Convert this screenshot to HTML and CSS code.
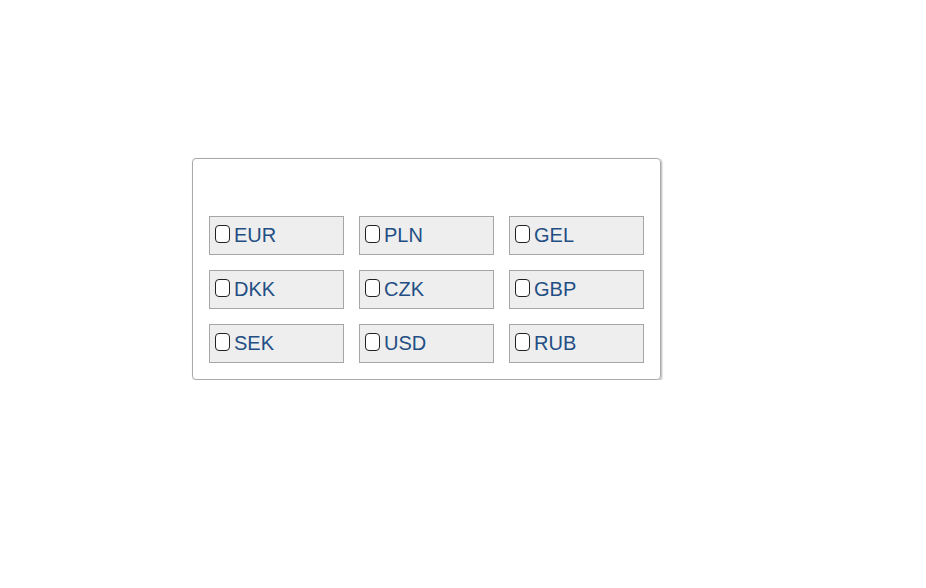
FILE: index.html
```html
<!DOCTYPE html>
<html>
<head>
<meta charset="utf-8">
<link rel="stylesheet" href="styles.css">
</head>
<body>
<div class="card">
  <div class="grid">
    <label class="item"><input type="checkbox" class="cb"><span>EUR</span></label>
    <label class="item"><input type="checkbox" class="cb"><span>PLN</span></label>
    <label class="item"><input type="checkbox" class="cb"><span>GEL</span></label>
    <label class="item"><input type="checkbox" class="cb"><span>DKK</span></label>
    <label class="item"><input type="checkbox" class="cb"><span>CZK</span></label>
    <label class="item"><input type="checkbox" class="cb"><span>GBP</span></label>
    <label class="item"><input type="checkbox" class="cb"><span>SEK</span></label>
    <label class="item"><input type="checkbox" class="cb"><span>USD</span></label>
    <label class="item"><input type="checkbox" class="cb"><span>RUB</span></label>
  </div>
</div>
</body>
</html>
```
FILE: styles.css
```css
html, body { margin: 0; padding: 0; background: #fff; }
body { font-family: "Liberation Sans", Arial, sans-serif; }
.card {
  margin: 158px 0 0 192px;
  width: 467px;
  height: 220px;
  border: 1px solid #aaa;
  border-radius: 4px;
  box-shadow: 1px 1px 2px rgba(0,0,0,0.3);
}
.grid {
  display: grid;
  grid-template-columns: repeat(3, 135px);
  grid-auto-rows: 39px;
  column-gap: 15px;
  row-gap: 15px;
  padding: 57px 0 0 16px;
}
.item {
  display: flex;
  align-items: flex-start;
  box-sizing: border-box;
  border: 1px solid #a6a6a6;
  background: #eeeeee;
  color: #234e84;
  font-size: 20px;
  line-height: 20px;
  padding: 7px 0 0 5px;
}
.cb {
  -webkit-appearance: none;
  appearance: none;
  box-sizing: border-box;
  margin: 1px 4px 0 0;
  width: 15px;
  height: 18px;
  border: 1px solid #222;
  border-radius: 4px;
  background: #fff;
}
.item span { padding-top: 1px; }
```
